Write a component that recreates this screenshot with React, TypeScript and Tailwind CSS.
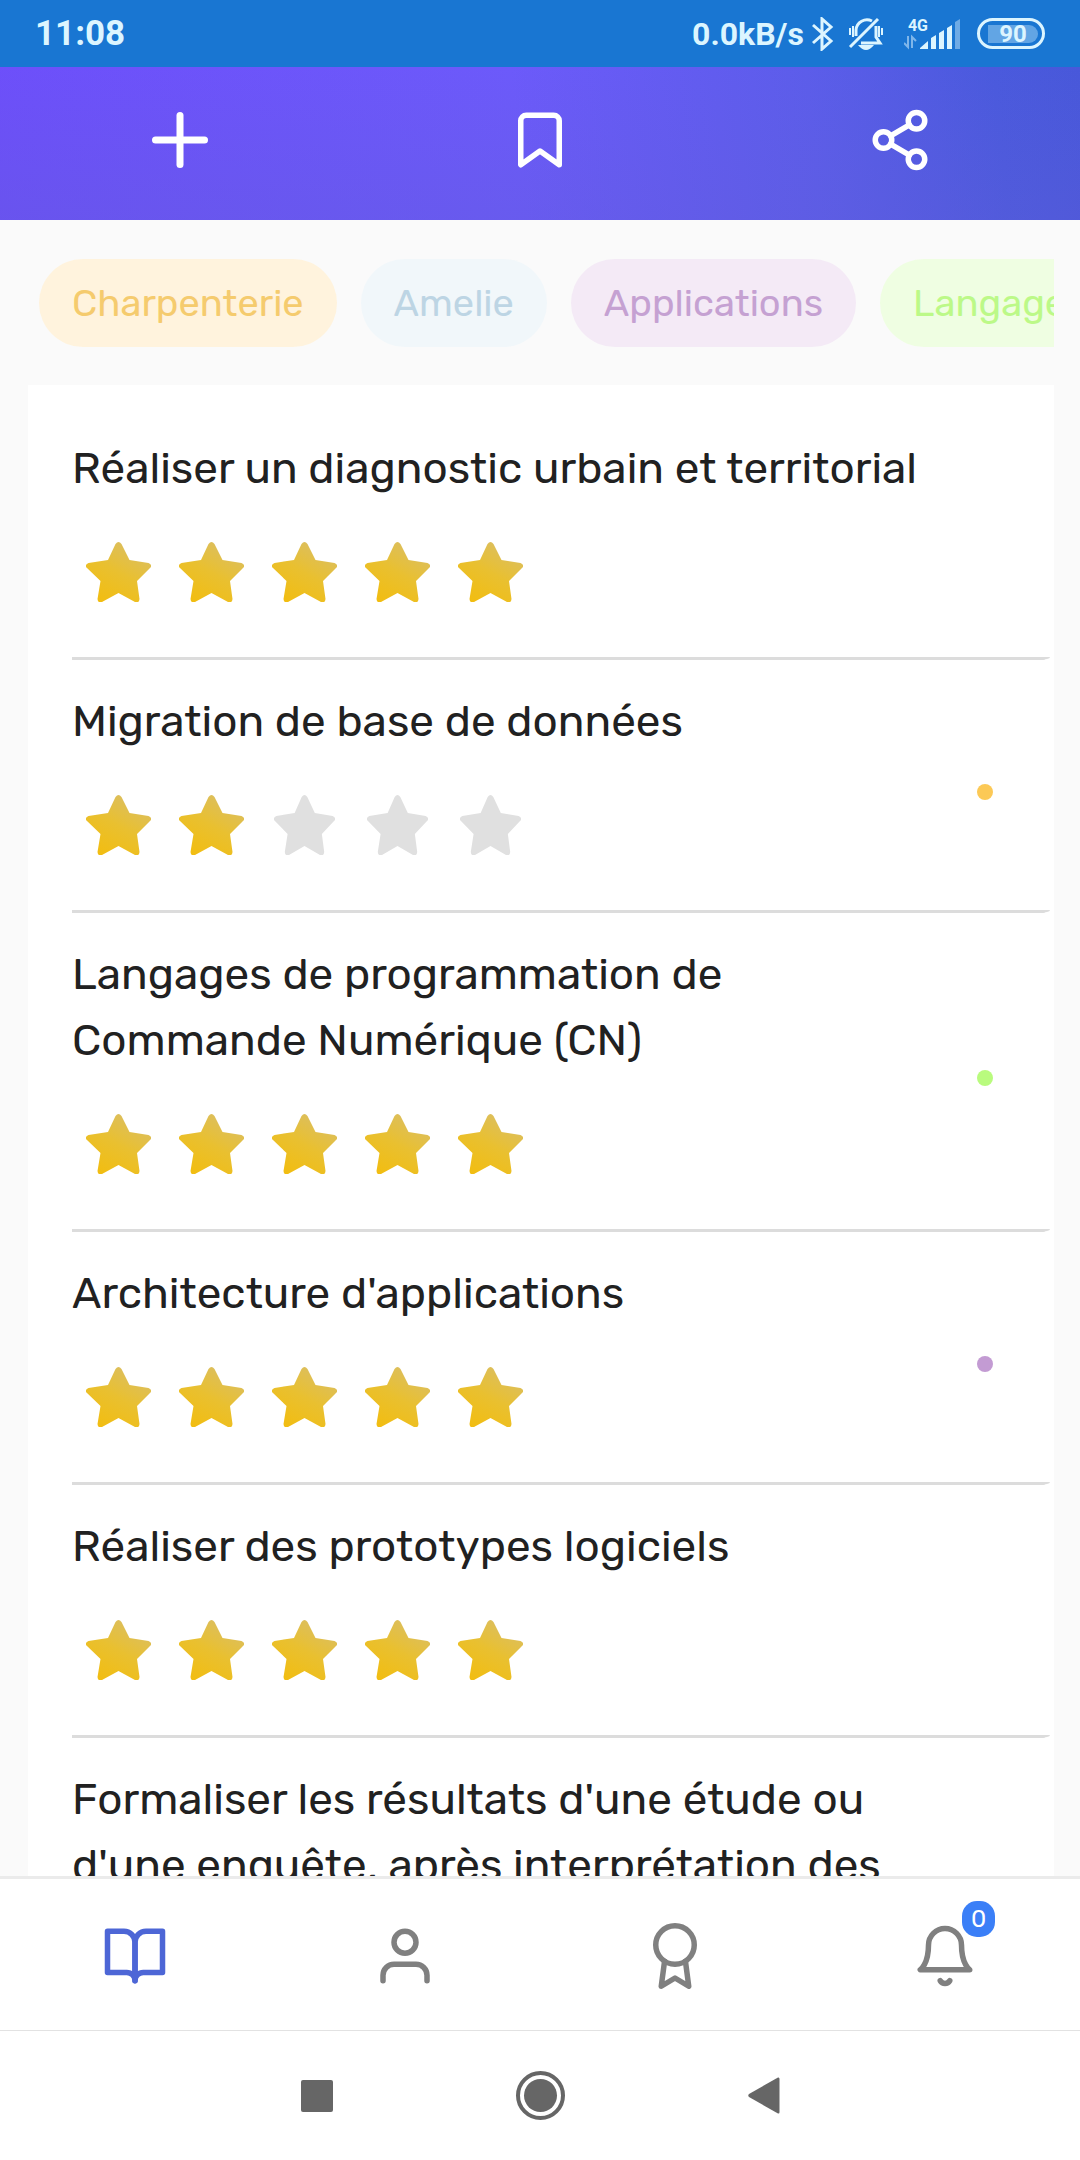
import { FiAward, FiBell, FiBookmark, FiBookOpen, FiPlus, FiShare2, FiUser } from "react-icons/fi";

const tags = [
  { label: "Charpenterie", style: "bg-[#fff3dd] text-[#f5cb6e]" },
  { label: "Amelie", style: "bg-[#f1f7fa] text-[#bdd5e4]" },
  { label: "Applications", style: "bg-[#f4eaf6] text-[#c5a1d2]" },
  { label: "Langages", style: "bg-[#effee2] text-[#bcf988]" },
];

const skills = [
  { title: "Réaliser un diagnostic urbain et territorial", rating: 5, dot: "" },
  { title: "Migration de base de données", rating: 2, dot: "bg-[#fcc956]" },
  { title: "Langages de programmation de Commande Numérique (CN)", rating: 5, dot: "bg-[#b9fb7e]" },
  { title: "Architecture d'applications", rating: 5, dot: "bg-[#c39bd3]" },
  { title: "Réaliser des prototypes logiciels", rating: 5, dot: "" },
  { title: "Formaliser les résultats d'une étude ou d'une enquête, après interprétation des", rating: 5, dot: "" },
];

function Star({ on }: { on: boolean }) {
  return (
    <svg viewBox="0 0 65 60" className={on ? "h-[60px] w-[65px]" : "h-[60px] w-[65px] px-0.5"} preserveAspectRatio="none" aria-hidden="true">
      <path
        fill={on ? "url(#gold)" : "#e0e0e0"}
        d="M29.5 2Q32.5-2 35.5 2L43.5 18L62.5 21Q67 23 64 26L51 39L53.5 57Q53 61.5 49 60L32.5 51L16 60Q12 61.5 11.5 57L14.5 39L1 26Q-2 23 2.5 21L22 18Z"
      />
    </svg>
  );
}

function StatusBar() {
  return (
    <div className="flex h-[67px] shrink-0 items-center justify-between bg-[#1976d2] px-[35px] font-['Roboto',sans-serif] text-[#dcf5ff]">
      <span className="text-[35px] leading-none font-bold">11:08</span>
      <div className="flex items-center">
        <span className="text-[32px] leading-none font-bold">0.0kB/s</span>
        <svg viewBox="0 0 22 34" className="ml-2 h-[34px] w-[22px]" fill="none" stroke="currentColor" strokeWidth="3">
          <path d="M1 8L19 24L10 32V2L19 10L1 26" />
        </svg>
        <svg viewBox="0 0 36 34" className="ml-[14px] h-[34px] w-[36px]" fill="none" stroke="currentColor" strokeWidth="3">
          <path d="M2 30L30 2" />
          <path d="M8 19V13A11 11 0 0 1 24 4M28 9V20L32 26H13" />
          <path d="M2 11V18M5 9V20M31 9V20M34 11V18" strokeWidth="2" />
          <path d="M10 28H26Q18 38 10 28Z" fill="currentColor" stroke="none" />
        </svg>
        <div className="ml-5 flex flex-col">
          <span className="ml-1 text-[16px] leading-4 font-bold">4G</span>
          <svg viewBox="0 0 14 16" className="h-4 w-[14px]" fill="none" stroke="#7fb6ea" strokeWidth="2">
            <path d="M0 9L4 13V2M8 14V3L12 7" />
          </svg>
        </div>
        <svg viewBox="0 0 41 30" className="-ml-2 h-[30px] w-[41px]" fill="currentColor">
          <path d="M0 30V29L8 22V30ZM11 30V19L16 16V30ZM19 30V14L24 11V30ZM27 30V9L32 6V30Z" />
          <path d="M35 30V3L40 0V30Z" fill="#6fabe5" />
        </svg>
        <div className="ml-4 flex h-[31px] w-[68px] items-center rounded-full border-3 border-[#dcf5ff] px-1 pl-2">
          <div className="flex h-[18px] w-full items-center justify-center rounded-r-full rounded-l-sm bg-[#62a5e4] text-[24px] leading-none font-bold">
            90
          </div>
        </div>
      </div>
    </div>
  );
}

export default function App() {
  return (
    <div className="flex h-screen flex-col overflow-hidden bg-[#fafafa] font-['Rubik','Roboto',sans-serif] text-[#212121]">
      <svg width="0" height="0" className="absolute" aria-hidden="true">
        <linearGradient id="gold" x1="0.2" y1="1" x2="0.8" y2="0">
          <stop offset="0" stopColor="#f2bd10" />
          <stop offset="0.5" stopColor="#e9c030" />
          <stop offset="1" stopColor="#d9be68" />
        </linearGradient>
      </svg>

      <StatusBar />

      <header className="h-[153px] shrink-0 bg-[linear-gradient(84deg,#6d4ffa_0%,#6c5afa_48%,#5c5dea_75%,#4a5add_92%,#4858da_100%)] text-white">
        <div className="grid h-full grid-cols-3 place-items-center bg-linear-to-b from-transparent to-[#605cd8]/35 pb-2">
          <button aria-label="Ajouter"><FiPlus className="size-[84px]" /></button>
          <button aria-label="Favoris"><FiBookmark className="size-[66px]" /></button>
          <button aria-label="Partager"><FiShare2 className="size-[66px]" /></button>
        </div>
      </header>

      <main className="flex min-h-0 flex-1 flex-col pr-[26px] pl-7">
        <div className="flex shrink-0 gap-6 overflow-x-auto pt-[39px] pb-[38px] pl-[11px] [scrollbar-width:none]">
          {tags.map((t) => (
            <button key={t.label} className={`h-[88px] shrink-0 rounded-full px-[33px] text-[38px] leading-none ${t.style}`}>
              {t.label}
            </button>
          ))}
        </div>
        <ul className="min-h-0 flex-1 overflow-y-auto bg-white pt-[22px] pr-1 pl-11 [scrollbar-width:none]">
          {skills.map((s) => (
            <li key={s.title}>
              <div className="flex items-center pt-7 pb-[55px]">
                <div className="flex-1">
                  <h2 className="text-[44px] leading-[66px]">{s.title}</h2>
                  <div className="mt-[41px] flex gap-7 pl-[14px]" role="img" aria-label={`${s.rating} sur 5`}>
                    {[1, 2, 3, 4, 5].map((n) => (
                      <Star key={n} on={n <= s.rating} />
                    ))}
                  </div>
                </div>
                <div className="flex w-[130px] justify-center pt-10">
                  {s.dot && <span className={`size-4 rounded-full ${s.dot}`} />}
                </div>
              </div>
              <div className="h-[3px] rounded-br-[10px_3px] bg-[#dcdcdc]" />
            </li>
          ))}
        </ul>
      </main>

      <nav className="grid h-[154px] shrink-0 grid-cols-4 place-items-center border-t-3 border-[#ebebeb] bg-white pt-0.5 text-[#808080]">
        <button aria-label="Compétences" className="text-[#4d66d6]"><FiBookOpen className="size-[66px]" /></button>
        <button aria-label="Profil"><FiUser className="size-[66px]" /></button>
        <button aria-label="Badges"><FiAward className="size-[66px]" /></button>
        <button aria-label="Notifications" className="relative">
          <FiBell className="size-[66px]" />
          <span className="absolute -top-[22px] left-[50px] flex h-9 w-[33px] items-center justify-center rounded-[15px] bg-[#3b7ff7] text-[24px] leading-none text-white">
            0
          </span>
        </button>
      </nav>

      <div className="flex h-[130px] shrink-0 items-center justify-center gap-[183px] border-t border-[#e2e2e2] bg-white text-[#666666]">
        <button aria-label="Applications récentes" className="size-8 rounded-xs bg-[#666666]" />
        <button aria-label="Accueil" className="flex size-[49px] items-center justify-center rounded-full border-4 border-[#666666]">
          <span className="size-[33px] rounded-full bg-[#666666]" />
        </button>
        <button aria-label="Retour">
          <svg viewBox="0 0 32 37" className="h-[37px] w-8" fill="currentColor">
            <path d="M30 .5Q31.500 0 31.500 2V35Q31.500 37 30 36.500L1 20Q-.5 18.500 1 17Z" />
          </svg>
        </button>
      </div>
    </div>
  );
}
